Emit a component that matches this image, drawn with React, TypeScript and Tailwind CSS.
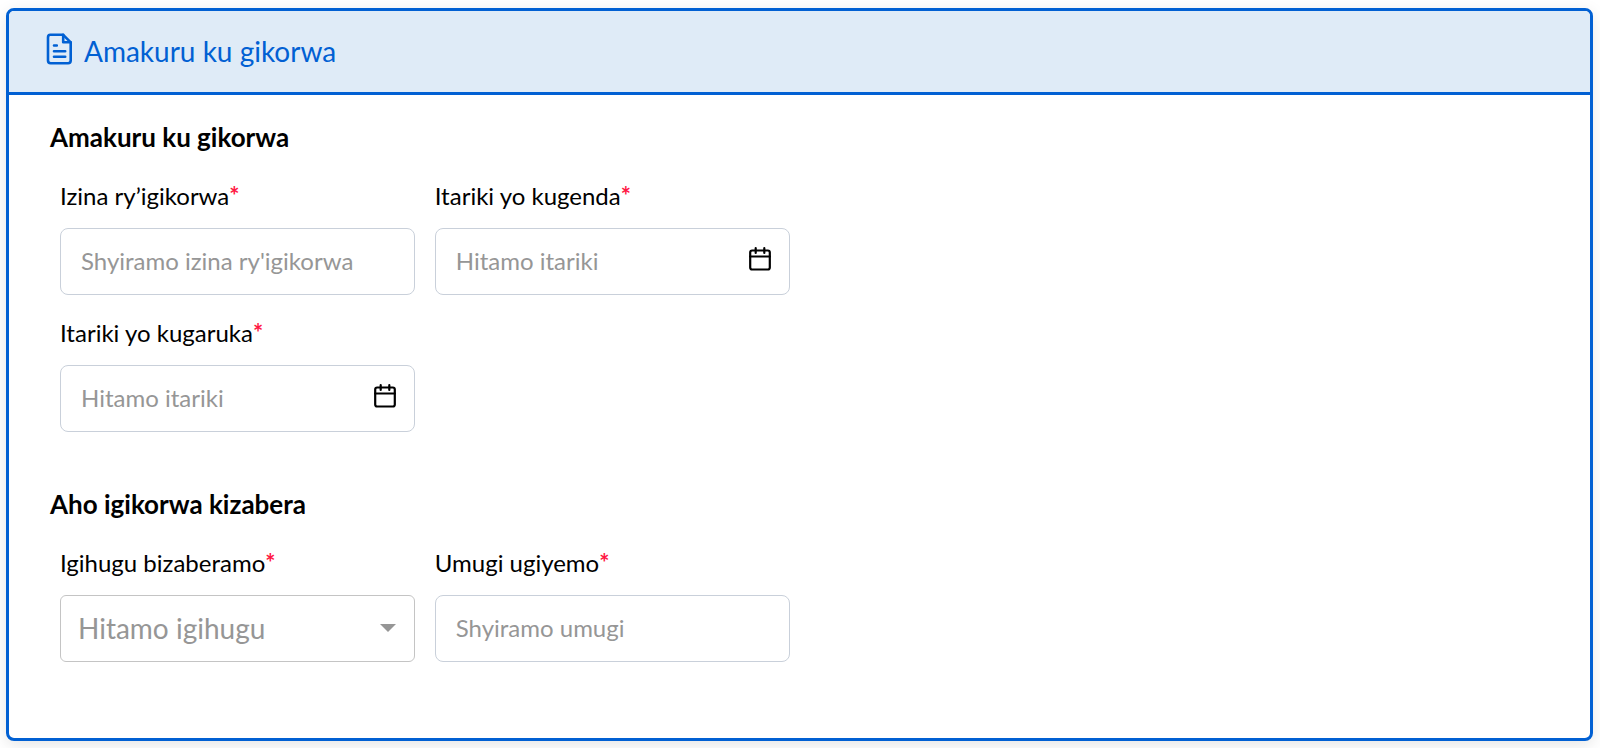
import type { ReactNode } from 'react'

function DocumentIcon() {
  return (
    <svg
      viewBox="0 0 26 32"
      className="mb-1 h-8 w-[26px] shrink-0"
      fill="none"
      stroke="currentColor"
      strokeWidth="2.6"
      strokeLinecap="round"
      strokeLinejoin="round"
      aria-hidden="true"
    >
      <path d="M4.4 1.8H17.2L24.7 9.3V27.6A2.6 2.6 0 0 1 22.1 30.2H4.6A2.6 2.6 0 0 1 2 27.6V4.4A2.6 2.6 0 0 1 4.4 1.8Z" />
      <path d="M17.2 1.8V9.3H24.7" />
      <path d="M8 12.5H10.8M8 18.2H19.2M8 23.7H19.2" />
    </svg>
  )
}

function CalendarIcon() {
  return (
    <svg
      viewBox="0 0 22 24"
      className="h-6 w-[22px]"
      fill="none"
      stroke="currentColor"
      strokeWidth="2.2"
      strokeLinecap="round"
      strokeLinejoin="round"
      aria-hidden="true"
    >
      <rect x="1.2" y="3.5" width="19.6" height="19" rx="2" />
      <path d="M1.2 9.5H20.8M6.7 1.2V6M15.3 1.2V6" />
    </svg>
  )
}

function Field({ id, label, children }: { id: string; label: string; children: ReactNode }) {
  return (
    <div className="flex flex-col gap-4">
      <label htmlFor={id} className="text-[24px] leading-8 text-black">
        {label}
        <span className="font-bold text-[#ff1744]">*</span>
      </label>
      {children}
    </div>
  )
}

function TextField({ id, label, placeholder }: { id: string; label: string; placeholder: string }) {
  return (
    <Field id={id} label={label}>
      <input
        id={id}
        type="text"
        placeholder={placeholder}
        className="h-[67px] w-full rounded-lg border border-[#c9d0da] bg-white px-5 pb-[2px] text-[24px] placeholder:text-[#969696]"
      />
    </Field>
  )
}

function DateField({ id, label }: { id: string; label: string }) {
  return (
    <Field id={id} label={label}>
      <div className="flex h-[67px] items-center rounded-lg border border-[#c9d0da] bg-white pr-[18px] pb-[2px] pl-5">
        <input
          id={id}
          type="text"
          placeholder="Hitamo itariki"
          className="min-w-0 flex-1 text-[24px] outline-none placeholder:text-[#969696]"
        />
        <button type="button" aria-label={label} className="pb-1 text-black">
          <CalendarIcon />
        </button>
      </div>
    </Field>
  )
}

function Section({ title, children }: { title: string; children: ReactNode }) {
  return (
    <section>
      <h2 className="mb-[27px] text-[26px] leading-8 font-bold text-black">{title}</h2>
      <div className="grid w-1/2 grid-cols-2 gap-x-5 gap-y-[22px] px-[10px]">{children}</div>
    </section>
  )
}

export default function App() {
  return (
    <div className="bg-white pt-2 pr-[7px] pb-[7px] pl-[6px] font-[Lato,sans-serif]">
      <main className="overflow-hidden rounded-lg border-3 border-[#0160d3] bg-white shadow-[0_4px_16px_rgba(0,0,0,0.1)]">
        <header className="flex items-center gap-3 border-b-3 border-[#0160d3] bg-[#dfebf7] px-[37px] pt-5 pb-[21px] text-[#0160d3]">
          <DocumentIcon />
          <h1 className="text-[28px] leading-10">Amakuru ku gikorwa</h1>
        </header>

        <div className="flex flex-col gap-14 px-[41px] pt-[26px] pb-[76px]">
          <Section title="Amakuru ku gikorwa">
            <TextField id="izina" label="Izina ry’igikorwa" placeholder="Shyiramo izina ry'igikorwa" />
            <DateField id="kugenda" label="Itariki yo kugenda" />
            <DateField id="kugaruka" label="Itariki yo kugaruka" />
          </Section>

          <Section title="Aho igikorwa kizabera">
            <Field id="igihugu" label="Igihugu bizaberamo">
              <div className="relative">
                <select
                  id="igihugu"
                  className="h-[67px] w-full appearance-none rounded-md border border-[#c4c4c4] bg-white px-[17px] pb-[2px] text-[28px] text-[#969696]"
                >
                  <option>Hitamo igihugu</option>
                </select>
                <svg
                  viewBox="0 0 16 8"
                  className="pointer-events-none absolute top-[29px] right-[19px] h-2 w-4 fill-[#969696]"
                  aria-hidden="true"
                >
                  <path d="M0 0H16L8 8Z" />
                </svg>
              </div>
            </Field>
            <TextField id="umugi" label="Umugi ugiyemo" placeholder="Shyiramo umugi" />
          </Section>
        </div>
      </main>
    </div>
  )
}
